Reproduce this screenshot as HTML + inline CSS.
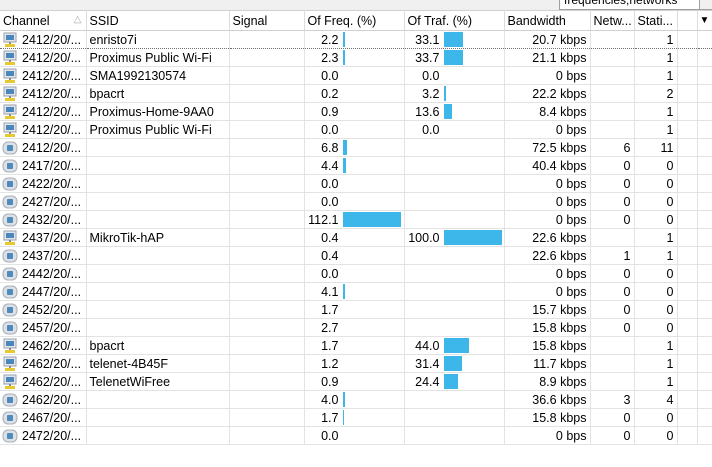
<!DOCTYPE html>
<html><head><meta charset="utf-8"><style>
body{margin:0;width:712px;height:467px;background:#fff;font-family:"Liberation Sans",Arial,sans-serif;font-size:12px;color:#000;position:relative;overflow:hidden}
.top{position:absolute;left:0;top:0;width:712px;height:10px;background:#f0f0f0}
.combo{position:absolute;left:559px;top:-8px;width:136px;height:16px;border:1px solid #a0a0a0;background:#fff;font-size:12px;line-height:14px;padding-left:4px;overflow:hidden;white-space:nowrap}
.cbtn{position:absolute;left:699px;top:-8px;width:14px;height:16px;border:1px solid #a0a0a0;background:#f0f0f0}
table{position:absolute;left:0;top:10px;border-collapse:collapse;table-layout:fixed;width:712px}
th{height:19px;background:#fff;font-weight:normal;text-align:left;padding:0 0 0 3px;border-top:1px solid #d0d0d0;border-right:1px solid #dcdcdc;border-bottom:1px solid #d0d0d0;white-space:nowrap;overflow:hidden;font-size:12.5px}
td{height:17px;padding:0 3px;border-right:1px solid #e3e3e3;border-bottom:1px solid #e3e3e3;white-space:nowrap;overflow:hidden;font-size:12.5px}
td.r{text-align:right}
td.ch{padding-left:2px}
.ic{display:inline-block;width:16px;height:16px;vertical-align:-4px;margin-right:4px}
.b{display:inline-block;height:15px;background:#3db6ea;vertical-align:-3px}
.num{display:inline-block;text-align:right}
.f .num{width:34px}.t .num{width:35px}
.f,.t{padding-left:0}
.f .b,.t .b{margin-left:4px}
tr.first td{border-bottom:1px dotted #707070}
</style></head><body>
<div class="top"></div>
<div class="combo">frequencies,networks</div>
<div class="cbtn"></div>
<svg style="position:absolute;left:0;top:0" width="0" height="0">
<defs>
<symbol id="net" viewBox="0 0 16 16"><rect x="2" y="1" width="12" height="9" fill="#e2e6ea" stroke="#9aa2ae"/><rect x="4" y="3" width="8" height="5" fill="#4a86bd"/><rect x="7" y="10" width="2" height="3" fill="#888"/><rect x="3" y="12" width="10" height="3" fill="#e6c830"/></symbol>
<symbol id="dev" viewBox="0 0 16 16"><rect x="1" y="2" width="14" height="12" rx="5" fill="#dde0e4" stroke="#a8b0b8"/><rect x="5" y="5" width="6" height="6" rx="1" fill="#4f8bbd"/></symbol>
</defs></svg>
<table>
<colgroup><col style="width:86px"><col style="width:143px"><col style="width:75px"><col style="width:100px"><col style="width:100px"><col style="width:86px"><col style="width:44px"><col style="width:43px"><col style="width:20px"><col style="width:15px"></colgroup>
<tr><th>Channel <span style="color:#aaa;float:right;margin-right:4px;font-size:10px">△</span></th><th>SSID</th><th>Signal</th><th>Of Freq. (%)</th><th>Of Traf. (%)</th><th>Bandwidth</th><th>Netw...</th><th>Stati...</th><th></th><th style="padding:0;text-align:center;font-size:10px">▼</th></tr>
<tr class="first"><td class="ch"><svg class="ic"><use href="#net"/></svg>2412/20/...</td><td>enristo7i</td><td></td><td class="f"><span class="num">2.2</span><span class="b" style="width:2px"></span></td><td class="t"><span class="num">33.1</span><span class="b" style="width:19px"></span></td><td class="r">20.7 kbps</td><td class="r"></td><td class="r">1</td><td></td><td></td></tr>
<tr><td class="ch"><svg class="ic"><use href="#net"/></svg>2412/20/...</td><td>Proximus Public Wi-Fi</td><td></td><td class="f"><span class="num">2.3</span><span class="b" style="width:2px"></span></td><td class="t"><span class="num">33.7</span><span class="b" style="width:19px"></span></td><td class="r">21.1 kbps</td><td class="r"></td><td class="r">1</td><td></td><td></td></tr>
<tr><td class="ch"><svg class="ic"><use href="#net"/></svg>2412/20/...</td><td>SMA1992130574</td><td></td><td class="f"><span class="num">0.0</span></td><td class="t"><span class="num">0.0</span></td><td class="r">0 bps</td><td class="r"></td><td class="r">1</td><td></td><td></td></tr>
<tr><td class="ch"><svg class="ic"><use href="#net"/></svg>2412/20/...</td><td>bpacrt</td><td></td><td class="f"><span class="num">0.2</span></td><td class="t"><span class="num">3.2</span><span class="b" style="width:2px"></span></td><td class="r">22.2 kbps</td><td class="r"></td><td class="r">2</td><td></td><td></td></tr>
<tr><td class="ch"><svg class="ic"><use href="#net"/></svg>2412/20/...</td><td>Proximus-Home-9AA0</td><td></td><td class="f"><span class="num">0.9</span></td><td class="t"><span class="num">13.6</span><span class="b" style="width:8px"></span></td><td class="r">8.4 kbps</td><td class="r"></td><td class="r">1</td><td></td><td></td></tr>
<tr><td class="ch"><svg class="ic"><use href="#net"/></svg>2412/20/...</td><td>Proximus Public Wi-Fi</td><td></td><td class="f"><span class="num">0.0</span></td><td class="t"><span class="num">0.0</span></td><td class="r">0 bps</td><td class="r"></td><td class="r">1</td><td></td><td></td></tr>
<tr><td class="ch"><svg class="ic"><use href="#dev"/></svg>2412/20/...</td><td></td><td></td><td class="f"><span class="num">6.8</span><span class="b" style="width:4px"></span></td><td class="t"></td><td class="r">72.5 kbps</td><td class="r">6</td><td class="r">11</td><td></td><td></td></tr>
<tr><td class="ch"><svg class="ic"><use href="#dev"/></svg>2417/20/...</td><td></td><td></td><td class="f"><span class="num">4.4</span><span class="b" style="width:3px"></span></td><td class="t"></td><td class="r">40.4 kbps</td><td class="r">0</td><td class="r">0</td><td></td><td></td></tr>
<tr><td class="ch"><svg class="ic"><use href="#dev"/></svg>2422/20/...</td><td></td><td></td><td class="f"><span class="num">0.0</span></td><td class="t"></td><td class="r">0 bps</td><td class="r">0</td><td class="r">0</td><td></td><td></td></tr>
<tr><td class="ch"><svg class="ic"><use href="#dev"/></svg>2427/20/...</td><td></td><td></td><td class="f"><span class="num">0.0</span></td><td class="t"></td><td class="r">0 bps</td><td class="r">0</td><td class="r">0</td><td></td><td></td></tr>
<tr><td class="ch"><svg class="ic"><use href="#dev"/></svg>2432/20/...</td><td></td><td></td><td class="f"><span class="num">112.1</span><span class="b" style="width:58px"></span></td><td class="t"></td><td class="r">0 bps</td><td class="r">0</td><td class="r">0</td><td></td><td></td></tr>
<tr><td class="ch"><svg class="ic"><use href="#net"/></svg>2437/20/...</td><td>MikroTik-hAP</td><td></td><td class="f"><span class="num">0.4</span></td><td class="t"><span class="num">100.0</span><span class="b" style="width:58px"></span></td><td class="r">22.6 kbps</td><td class="r"></td><td class="r">1</td><td></td><td></td></tr>
<tr><td class="ch"><svg class="ic"><use href="#dev"/></svg>2437/20/...</td><td></td><td></td><td class="f"><span class="num">0.4</span></td><td class="t"></td><td class="r">22.6 kbps</td><td class="r">1</td><td class="r">1</td><td></td><td></td></tr>
<tr><td class="ch"><svg class="ic"><use href="#dev"/></svg>2442/20/...</td><td></td><td></td><td class="f"><span class="num">0.0</span></td><td class="t"></td><td class="r">0 bps</td><td class="r">0</td><td class="r">0</td><td></td><td></td></tr>
<tr><td class="ch"><svg class="ic"><use href="#dev"/></svg>2447/20/...</td><td></td><td></td><td class="f"><span class="num">4.1</span><span class="b" style="width:2px"></span></td><td class="t"></td><td class="r">0 bps</td><td class="r">0</td><td class="r">0</td><td></td><td></td></tr>
<tr><td class="ch"><svg class="ic"><use href="#dev"/></svg>2452/20/...</td><td></td><td></td><td class="f"><span class="num">1.7</span></td><td class="t"></td><td class="r">15.7 kbps</td><td class="r">0</td><td class="r">0</td><td></td><td></td></tr>
<tr><td class="ch"><svg class="ic"><use href="#dev"/></svg>2457/20/...</td><td></td><td></td><td class="f"><span class="num">2.7</span></td><td class="t"></td><td class="r">15.8 kbps</td><td class="r">0</td><td class="r">0</td><td></td><td></td></tr>
<tr><td class="ch"><svg class="ic"><use href="#net"/></svg>2462/20/...</td><td>bpacrt</td><td></td><td class="f"><span class="num">1.7</span></td><td class="t"><span class="num">44.0</span><span class="b" style="width:25px"></span></td><td class="r">15.8 kbps</td><td class="r"></td><td class="r">1</td><td></td><td></td></tr>
<tr><td class="ch"><svg class="ic"><use href="#net"/></svg>2462/20/...</td><td>telenet-4B45F</td><td></td><td class="f"><span class="num">1.2</span></td><td class="t"><span class="num">31.4</span><span class="b" style="width:18px"></span></td><td class="r">11.7 kbps</td><td class="r"></td><td class="r">1</td><td></td><td></td></tr>
<tr><td class="ch"><svg class="ic"><use href="#net"/></svg>2462/20/...</td><td>TelenetWiFree</td><td></td><td class="f"><span class="num">0.9</span></td><td class="t"><span class="num">24.4</span><span class="b" style="width:14px"></span></td><td class="r">8.9 kbps</td><td class="r"></td><td class="r">1</td><td></td><td></td></tr>
<tr><td class="ch"><svg class="ic"><use href="#dev"/></svg>2462/20/...</td><td></td><td></td><td class="f"><span class="num">4.0</span><span class="b" style="width:2px"></span></td><td class="t"></td><td class="r">36.6 kbps</td><td class="r">3</td><td class="r">4</td><td></td><td></td></tr>
<tr><td class="ch"><svg class="ic"><use href="#dev"/></svg>2467/20/...</td><td></td><td></td><td class="f"><span class="num">1.7</span><span class="b" style="width:1px"></span></td><td class="t"></td><td class="r">15.8 kbps</td><td class="r">0</td><td class="r">0</td><td></td><td></td></tr>
<tr><td class="ch"><svg class="ic"><use href="#dev"/></svg>2472/20/...</td><td></td><td></td><td class="f"><span class="num">0.0</span></td><td class="t"></td><td class="r">0 bps</td><td class="r">0</td><td class="r">0</td><td></td><td></td></tr>
</table>
</body></html>
